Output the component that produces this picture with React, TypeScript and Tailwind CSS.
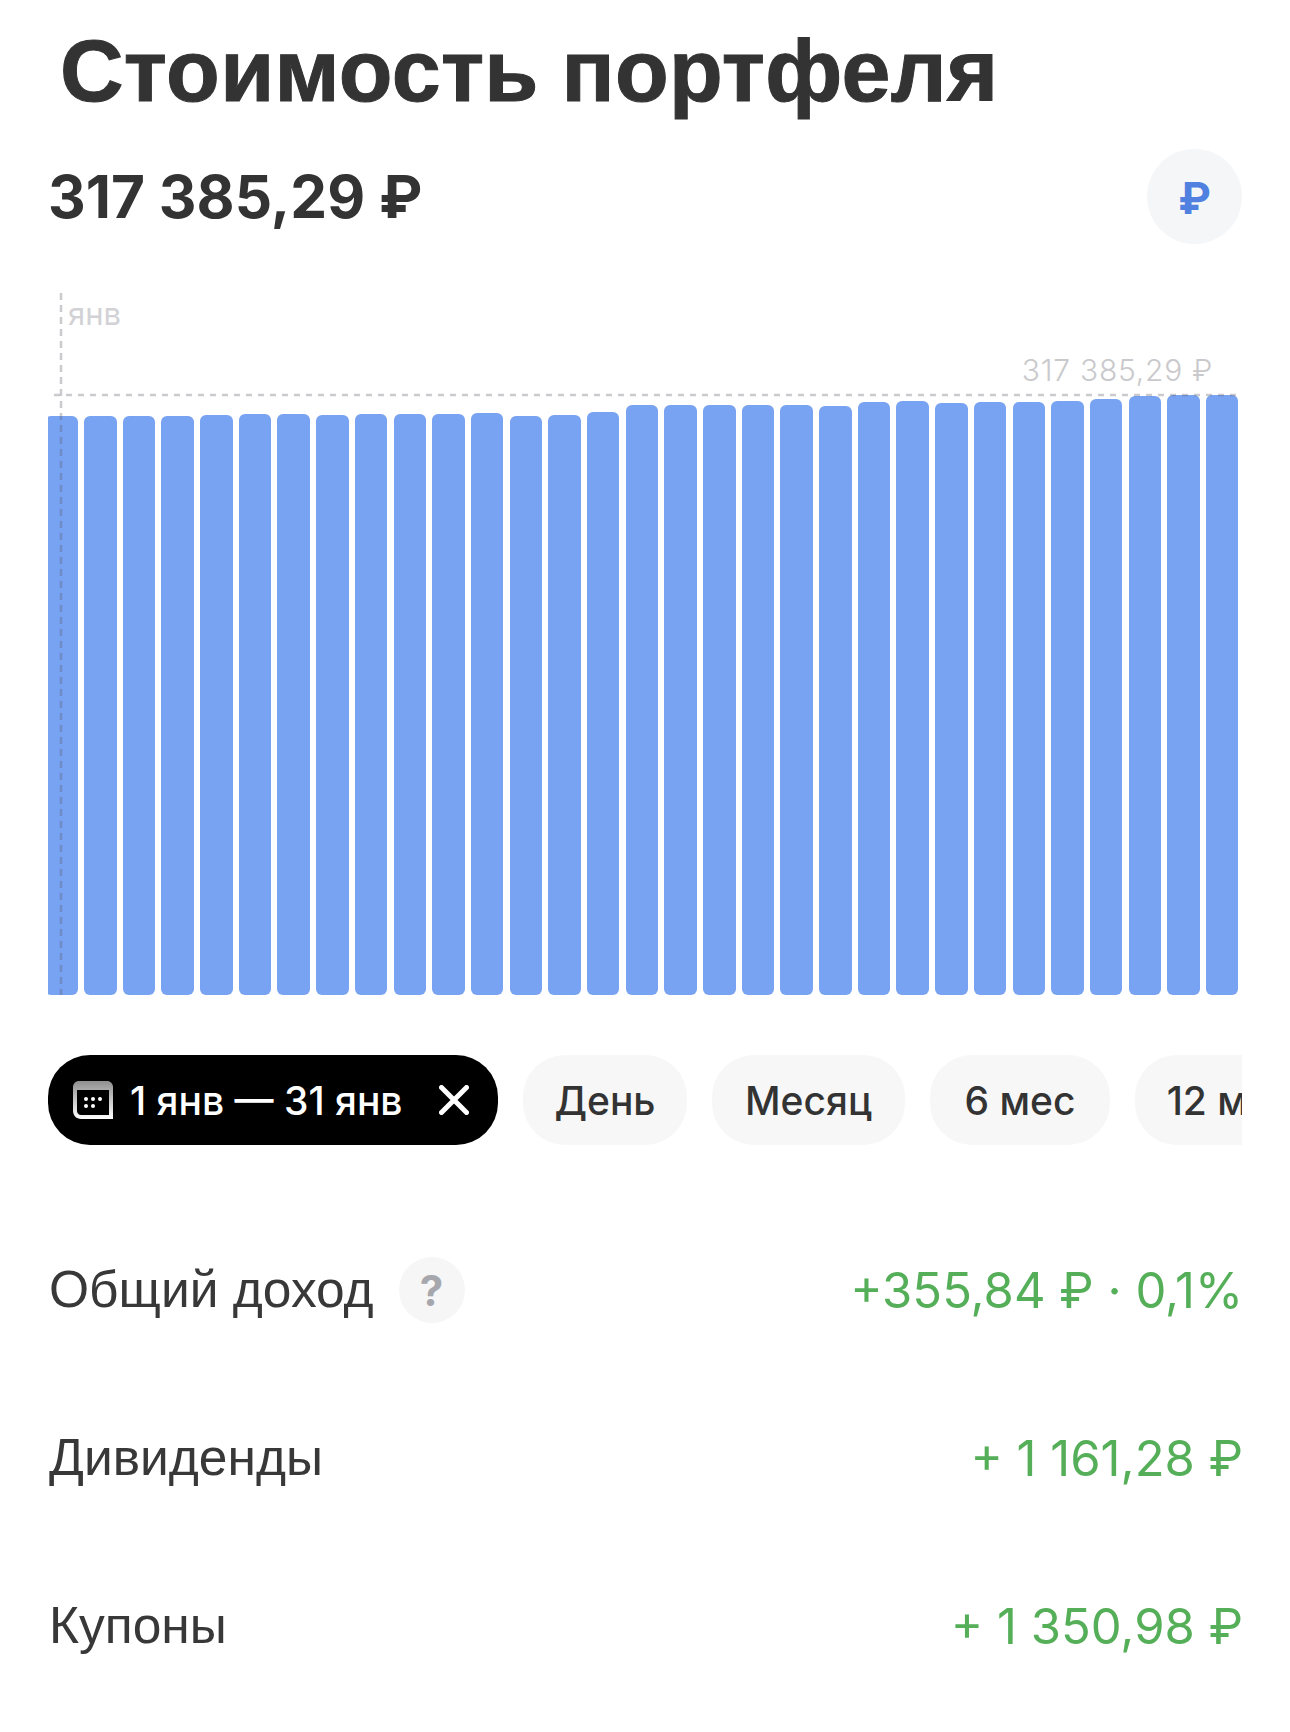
const tops = [416,416,416,416,414.5,414,414,415,414,414,414,413,416,415,412,405,405,405,405,405,406,402,401,403,402,402,401,399,396,395,395];
const CHART_TOP = 293;
const CHART_BOTTOM = 995;

function CalendarIcon() {
  return (
    <svg width="40" height="38" viewBox="0 0 40 38" className="shrink-0">
      <defs>
        <linearGradient id="calTop" x1="0" y1="0" x2="0" y2="1">
          <stop offset="0" stopColor="#8f8f8f" />
          <stop offset="1" stopColor="#ffffff" />
        </linearGradient>
      </defs>
      <path d="M6 0H34C37.3 0 40 2.7 40 6V38H8C3.6 38 0 34.4 0 30V6C0 2.7 2.7 0 6 0Z" fill="url(#calTop)" />
      <path d="M4 9H36V34H8C5.8 34 4 32.2 4 30V9Z" fill="#000" />
      <circle cx="13" cy="18" r="2" fill="#fff" />
      <circle cx="20" cy="18" r="2" fill="#fff" />
      <circle cx="27" cy="18" r="2" fill="#fff" />
      <circle cx="13" cy="25" r="2" fill="#fff" />
      <circle cx="20" cy="25" r="2" fill="#fff" />
    </svg>
  );
}

function Chart() {
  return (
    <div className="relative mt-[49px] h-[702px]">
      <div className="absolute inset-0 overflow-hidden">
        <div className="-ml-[2.7px] flex h-full items-end gap-[6.2px]">
          {tops.map((t, i) => (
            <div
              key={i}
              className="w-[32.5px] shrink-0 rounded-[6px] bg-[#78a2f2]"
              style={{ height: CHART_BOTTOM - t }}
            />
          ))}
        </div>
      </div>
      <svg className="absolute -left-[48px] top-0" width="1290" height="702" viewBox="0 0 1290 702">
        <line x1="61" y1="0" x2="61" y2="702" stroke="rgba(90,90,105,0.32)" strokeWidth="2.5" strokeDasharray="7 5" />
        <line x1="54" y1={395 - CHART_TOP} x2="1236" y2={395 - CHART_TOP} stroke="rgba(90,90,105,0.32)" strokeWidth="2.5" strokeDasharray="6 6" />
      </svg>
      <span className="absolute left-[20px] top-[3px] font-['Inter',sans-serif] text-[31px] leading-[36px] text-[#d2d2d6]">янв</span>
      <span className="absolute right-[29px] top-[59px] font-['Inter',sans-serif] text-[30px] font-light leading-[36px] tracking-[0.75px] text-[#c9c9cc]">317 385,29 ₽</span>
    </div>
  );
}

function Pill({ children, w }: { children: React.ReactNode; w: string }) {
  return (
    <div className={`flex h-[90px] shrink-0 items-center justify-center whitespace-nowrap rounded-[42px] bg-[#f7f7f8] pt-[2px] font-['Inter',sans-serif] text-[39px] font-medium text-[#333333] ${w}`}>
      {children}
    </div>
  );
}

function Row({ label, value, help, mt }: { label: string; value: string; help?: boolean; mt: string }) {
  return (
    <div className={`flex h-[66px] items-center justify-between ${mt}`}>
      <div className="flex items-center gap-[25px]">
        <span className="mb-[2px] ml-[1px] font-['Liberation_Sans',sans-serif] text-[51.5px] leading-[66px] text-[#383838]">{label}</span>
        {help && (
          <span className="flex h-[66px] w-[66px] items-center justify-center rounded-full bg-[#f6f6f7] font-['Inter',sans-serif] text-[42px] font-bold text-[#a6a7ad]">?</span>
        )}
      </div>
      <span className="-mr-[1px] mt-[2px] font-['Inter',sans-serif] text-[49px] font-normal leading-[66px] text-[#55ae58]">{value}</span>
    </div>
  );
}

export default function App() {
  return (
    <div className="h-[1732px] w-[1290px] overflow-hidden bg-white pl-[48px] pr-[48px]">
      <h1 className="ml-[12px] whitespace-nowrap pt-[21px] font-['Liberation_Sans',sans-serif] text-[88px] font-bold leading-[100px] tracking-[0.3px] text-[#333333] [word-spacing:-2px] [-webkit-text-stroke:1px_#333333]">
        Стоимость портфеля
      </h1>
      <div className="mt-[28px] flex h-[95px] items-center justify-between">
        <span className="font-['Inter',sans-serif] text-[58.5px] font-bold leading-[70px] text-[#333333]">317 385,29 ₽</span>
        <span className="flex h-[95px] w-[95px] items-center justify-center rounded-full bg-[#f5f6f8] pt-[3px] font-['Inter',sans-serif] text-[44px] font-bold text-[#5080e0]">₽</span>
      </div>
      <Chart />
      <div className="mt-[60px] flex gap-[25px] overflow-hidden">
        <div className="flex h-[90px] w-[450px] shrink-0 items-center rounded-[42px] bg-black pl-[25px] font-['Inter',sans-serif] text-[39px] font-medium text-white">
          <CalendarIcon />
          <span className="ml-[17px] whitespace-nowrap pt-[2px]">1 янв — 31 янв</span>
          <svg width="30" height="30" viewBox="0 0 30 30" className="ml-[36px] shrink-0">
            <path d="M2.5 2.5L27.5 27.5M27.5 2.5L2.5 27.5" stroke="#fff" strokeWidth="5" strokeLinecap="round" />
          </svg>
        </div>
        <Pill w="w-[164px]">День</Pill>
        <Pill w="w-[193px]">Месяц</Pill>
        <Pill w="w-[180px]">6 мес</Pill>
        <Pill w="w-[190px]">12 мес</Pill>
      </div>
      <Row mt="mt-[112px]" label="Общий доход" help value="+355,84 ₽ · 0,1%" />
      <Row mt="mt-[102px]" label="Дивиденды" value="+ 1 161,28 ₽" />
      <Row mt="mt-[102px]" label="Купоны" value="+ 1 350,98 ₽" />
    </div>
  );
}
